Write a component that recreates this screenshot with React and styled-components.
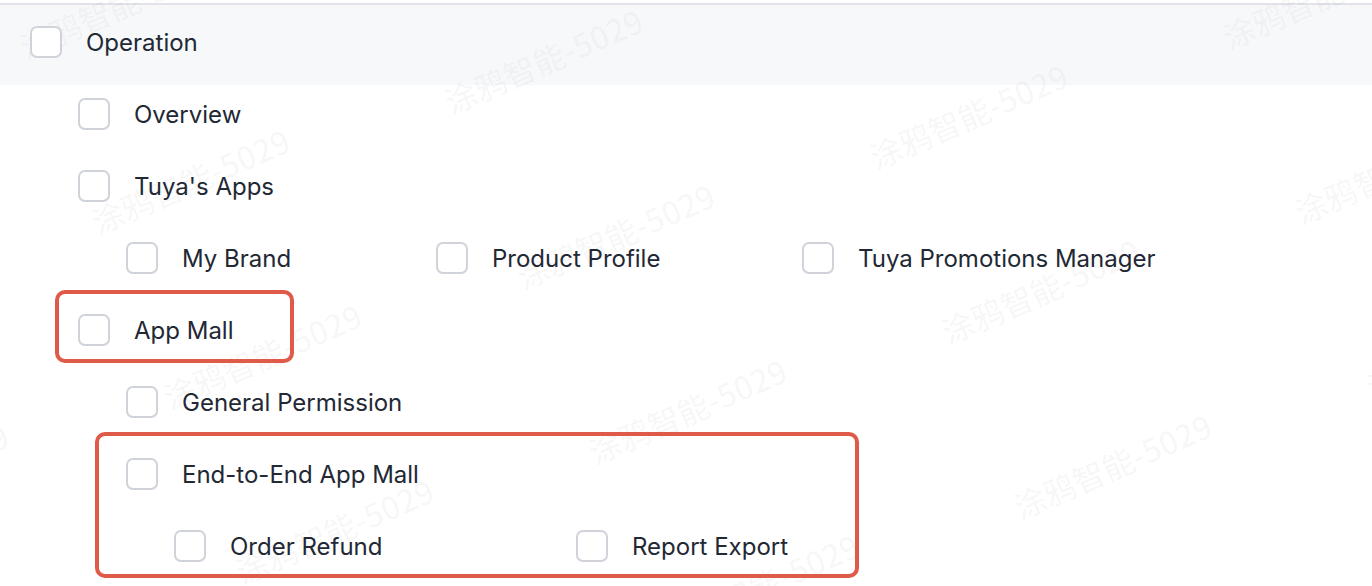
import React from "react";
import styled, { createGlobalStyle } from "styled-components";

const Global = createGlobalStyle`
  html, body { margin: 0; padding: 0; background: #ffffff; }
  body { font-family: Inter, "Noto Sans", "Noto Sans CJK SC", sans-serif; }
  * { box-sizing: border-box; }
`;

const Page = styled.div`
  position: relative;
  width: 1372px;
  height: 586px;
  overflow: hidden;
  padding-top: 3px;
  background: #ffffff;
`;

const Header = styled.div`
  display: flex;
  align-items: center;
  height: 82px;
  padding: 0 0 7px 30px;
  border-top: 2px solid #e2e2e8;
  background: #f7f8fa;
`;

const List = styled.div`
  display: flex;
  flex-direction: column;
  gap: 32px;
  padding-top: 9px;
`;

const Row = styled.div`
  display: flex;
  align-items: center;
  height: 40px;
  padding-left: ${(p) => 30 + p.$level * 48}px;
`;

const Item = styled.label`
  display: flex;
  align-items: center;
  gap: 24px;
  flex: 0 0 auto;
  width: ${(p) => (p.$width ? `${p.$width}px` : "auto")};
  cursor: pointer;
`;

const Box = styled.span`
  position: relative;
  z-index: 2;
  display: inline-block;
  width: 32px;
  height: 32px;
  border: 2px solid #d0d3d9;
  border-radius: 7px;
  background: #ffffff;
  flex: 0 0 auto;
`;

const Label = styled.span`
  position: relative;
  z-index: 2;
  font-family: Inter, "Noto Sans", sans-serif;
  font-size: 24px;
  line-height: 32px;
  padding-top: 2px;
  color: #222834;
  white-space: nowrap;
  letter-spacing: 0;
`;

const Highlight = styled.div`
  position: absolute;
  z-index: 3;
  left: ${(p) => p.$x}px;
  top: ${(p) => p.$y}px;
  width: ${(p) => p.$w}px;
  height: ${(p) => p.$h}px;
  border: 4.5px solid #df5a48;
  border-radius: 10px;
  pointer-events: none;
`;

const WatermarkLayer = styled.div`
  position: absolute;
  z-index: 1;
  inset: 0;
  overflow: hidden;
  pointer-events: none;
`;

const Mark = styled.span`
  position: absolute;
  transform: translate(-50%, -50%) rotate(-23.5deg);
  font-family: "Noto Sans CJK SC", "Noto Sans", sans-serif;
  font-size: 32px;
  font-weight: 500;
  color: rgba(20, 30, 50, 0.035);
  white-space: nowrap;
  user-select: none;
`;

const Check = ({ label, width }) => (
  <Item $width={width}>
    <Box />
    <Label>{label}</Label>
  </Item>
);

const rows = [
  { level: 1, items: [{ label: "Overview" }] },
  { level: 1, items: [{ label: "Tuya's Apps" }] },
  {
    level: 2,
    items: [
      { label: "My Brand", width: 310 },
      { label: "Product Profile", width: 366 },
      { label: "Tuya Promotions Manager" },
    ],
  },
  { level: 1, items: [{ label: "App Mall" }] },
  { level: 2, items: [{ label: "General Permission" }] },
  { level: 2, items: [{ label: "End-to-End App Mall" }] },
  {
    level: 3,
    items: [{ label: "Order Refund", width: 402 }, { label: "Report Export" }],
  },
];

const origin = { x: 118, y: 5 };
const va = { x: 425, y: 55 };
const vb = { x: 72, y: 175 };
const marks = [];
for (let i = -2; i <= 4; i++) {
  for (let j = -2; j <= 4; j++) {
    const x = origin.x + i * va.x + j * vb.x;
    const y = origin.y + i * va.y + j * vb.y;
    if (x > -200 && x < 1600 && y > -100 && y < 700) marks.push({ x, y, k: `${i}_${j}` });
  }
}

export default function App() {
  return (
    <>
      <Global />
      <Page>
        <Header>
          <Check label="Operation" />
        </Header>
        <List>
          {rows.map((r, idx) => (
            <Row key={idx} $level={r.level}>
              {r.items.map((it) => (
                <Check key={it.label} label={it.label} width={it.width} />
              ))}
            </Row>
          ))}
        </List>
        <WatermarkLayer>
          {marks.map((m) => (
            <Mark key={m.k} style={{ left: m.x, top: m.y }}>
              涂鸦智能-5029
            </Mark>
          ))}
        </WatermarkLayer>
        <Highlight $x={55} $y={290} $w={239} $h={73} />
        <Highlight $x={95} $y={432} $w={764} $h={146} />
      </Page>
    </>
  );
}
